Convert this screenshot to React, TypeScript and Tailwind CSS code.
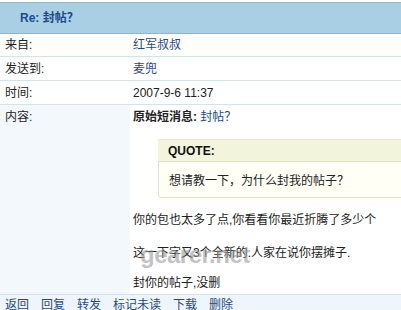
import React from "react";

export default function App() {
  const font = "font-['Liberation_Sans','Noto_Sans_CJK_SC',sans-serif]";
  return (
    <div className={`w-[401px] h-[310px] overflow-hidden bg-white text-[12px] leading-[14px] text-[#222] ${font}`}>
      <div className="h-[2px] bg-white" />
      <div className="h-[32px] border-t border-[#8fb6cf] border-b border-b-[#8ab4cf] bg-[#a9cfe5] flex items-center pl-[20px]">
        <span className="font-bold text-[#1d4a8a] text-[12px]">Re: 封帖？</span>
      </div>
      <div className="flex h-[23px] border-b border-[#d3e3ea] bg-[#fffefb] items-center">
        <div className="w-[133px] pl-[5px]">来自:</div>
        <div className="text-[#1f4b85]">红军叔叔</div>
      </div>
      <div className="flex h-[24px] border-b border-[#d3e3ea] bg-white items-center">
        <div className="w-[133px] pl-[5px]">发送到:</div>
        <div className="text-[#1f4b85]">麦兜</div>
      </div>
      <div className="flex h-[24px] border-b border-[#d3e3ea] bg-white items-center">
        <div className="w-[133px] pl-[5px]">时间:</div>
        <div>2007-9-6 11:37</div>
      </div>
      <div className="flex h-[190px] border-b border-[#d3e3ea] relative">
        <div className="w-[130px] bg-[#f3f8fd] pl-[5px] pt-[5px]">内容:</div>
        <div className="flex-1 pl-[3px] pt-[5px] relative">
          <div>
            <span className="font-bold">原始短消息:</span>{" "}
            <span className="text-[#1f4b85]">封帖？</span>
          </div>
          <div className="ml-[25px] mt-[15px] mr-[-4px]">
            <div className="h-[22px] bg-[#f2f5dc] border-t border-[#e6eac6] flex items-center pl-[10px] font-bold text-[#111]">QUOTE:</div>
            <div className="h-[37px] bg-[#fffff5] border border-[#dfe2c4] rounded-bl-[3px] flex items-center pl-[10px] pt-[3px]">想请教一下，为什么封我的帖子？</div>
          </div>
          <div className="mt-[15px]">你的包也太多了点,你看看你最近折腾了多少个</div>
          <div className="mt-[19px]">这一下字又3个全新的.人家在说你摆摊子.</div>
          <div className="mt-[16px]">封你的帖子,没删</div>
        </div>
        <div className="absolute left-[140px] top-[137px] text-[24px] leading-[26px] font-bold text-[#999999]/60 font-['Liberation_Sans',sans-serif] tracking-[-0.5px]">gearer.net</div>
      </div>
      <div className="flex h-[30px] bg-[#eef6fb] items-start pt-[3px] pl-[5px] gap-[12px] text-[#1f4b85]">
        <span>返回</span>
        <span>回复</span>
        <span>转发</span>
        <span>标记未读</span>
        <span>下载</span>
        <span>删除</span>
      </div>
    </div>
  );
}
